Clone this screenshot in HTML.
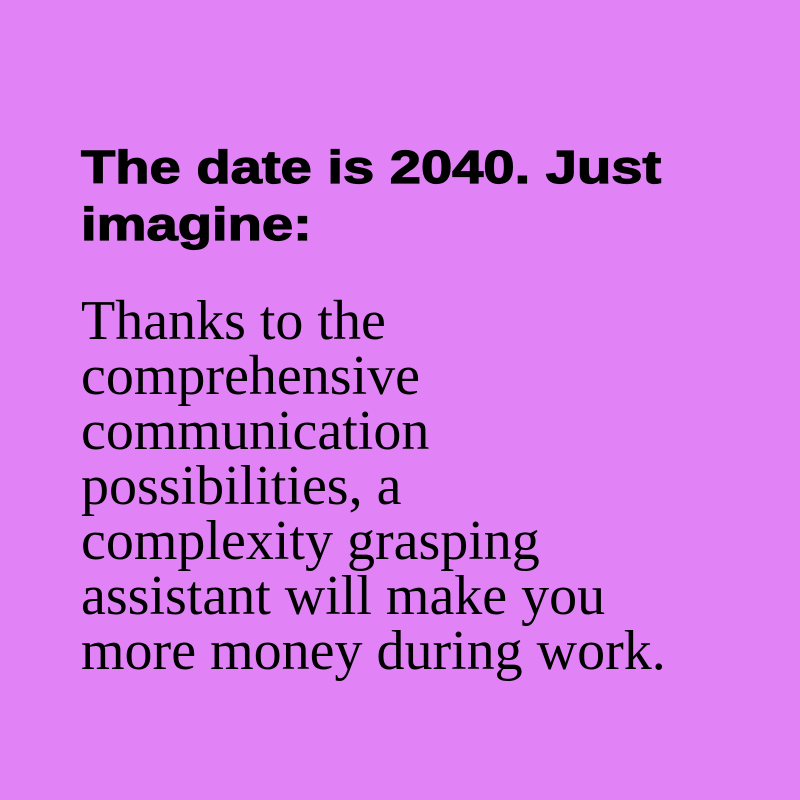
<!DOCTYPE html>
<html><head><style>
html,body{margin:0;padding:0;}
body{width:800px;height:800px;background:#e183f7;position:relative;overflow:hidden;}
h1{position:absolute;left:81px;top:139px;margin:0;font-family:"Liberation Sans",sans-serif;font-weight:bold;font-size:46px;line-height:57px;color:#000;white-space:nowrap;transform:scaleX(1.22);transform-origin:0 0;-webkit-text-stroke:1.2px #000;}
p{position:absolute;left:81px;top:294px;margin:0;font-family:"Liberation Serif",serif;font-size:56px;line-height:55px;color:#000;white-space:nowrap;}
</style></head><body>
<h1>The date is 2040. Just<br>imagine:</h1>
<p>Thanks to the<br>comprehensive<br>communication<br>possibilities, a<br>complexity grasping<br>assistant will make you<br>more money during work.</p>
</body></html>
